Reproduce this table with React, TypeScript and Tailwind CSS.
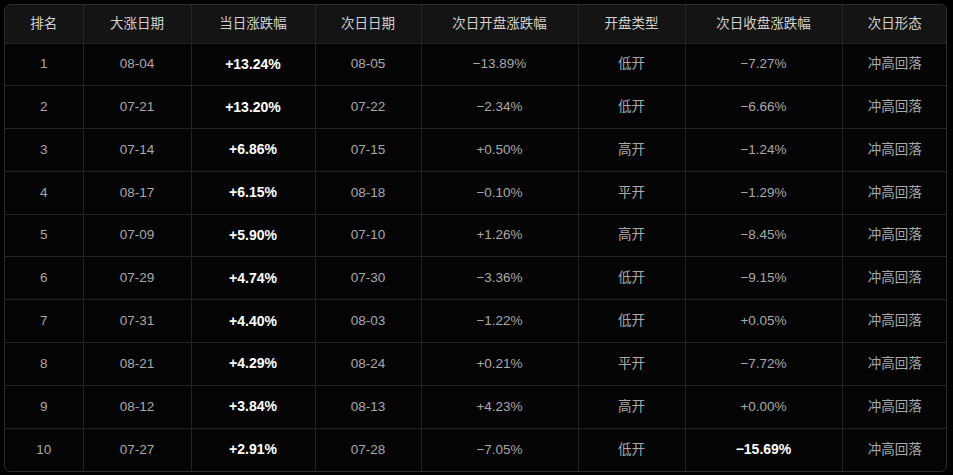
const headers = [
  { label: '排名', w: 'w-[78px]' },
  { label: '大涨日期', w: 'w-[108px]' },
  { label: '当日涨跌幅', w: 'w-[124px]' },
  { label: '次日日期', w: 'w-[106px]' },
  { label: '次日开盘涨跌幅', w: 'w-[157px]' },
  { label: '开盘类型', w: 'w-[107px]' },
  { label: '次日收盘涨跌幅', w: 'w-[157px]' },
  { label: '次日形态', w: 'w-[105px]' },
];

type Row = {
  rank: number;
  date: string;
  change: string;
  nextDate: string;
  open: string;
  openType: string;
  close: string;
  closeBold?: boolean;
  shape: string;
};

const rows: Row[] = [
  { rank: 1, date: '08-04', change: '+13.24%', nextDate: '08-05', open: '−13.89%', openType: '低开', close: '−7.27%', shape: '冲高回落' },
  { rank: 2, date: '07-21', change: '+13.20%', nextDate: '07-22', open: '−2.34%', openType: '低开', close: '−6.66%', shape: '冲高回落' },
  { rank: 3, date: '07-14', change: '+6.86%', nextDate: '07-15', open: '+0.50%', openType: '高开', close: '−1.24%', shape: '冲高回落' },
  { rank: 4, date: '08-17', change: '+6.15%', nextDate: '08-18', open: '−0.10%', openType: '平开', close: '−1.29%', shape: '冲高回落' },
  { rank: 5, date: '07-09', change: '+5.90%', nextDate: '07-10', open: '+1.26%', openType: '高开', close: '−8.45%', shape: '冲高回落' },
  { rank: 6, date: '07-29', change: '+4.74%', nextDate: '07-30', open: '−3.36%', openType: '低开', close: '−9.15%', shape: '冲高回落' },
  { rank: 7, date: '07-31', change: '+4.40%', nextDate: '08-03', open: '−1.22%', openType: '低开', close: '+0.05%', shape: '冲高回落' },
  { rank: 8, date: '08-21', change: '+4.29%', nextDate: '08-24', open: '+0.21%', openType: '平开', close: '−7.72%', shape: '冲高回落' },
  { rank: 9, date: '08-12', change: '+3.84%', nextDate: '08-13', open: '+4.23%', openType: '高开', close: '+0.00%', shape: '冲高回落' },
  { rank: 10, date: '07-27', change: '+2.91%', nextDate: '07-28', open: '−7.05%', openType: '低开', close: '−15.69%', closeBold: true, shape: '冲高回落' },
];

const cell = 'border-r border-b border-[#242424] last:border-r-0 text-center';
const plain = 'text-[13.5px] text-[#a9a9a9]';
const bold = 'text-[14px] font-bold text-white';

export default function App() {
  return (
    <div className="min-h-[475px] w-[953px] bg-black p-1 font-['Liberation_Sans','Noto_Sans_CJK_SC',sans-serif]">
      <div className="w-[943px] overflow-hidden rounded-md border border-[#2c2c2c] bg-[#040404]">
        <table className="w-full table-fixed border-collapse">
          <thead>
            <tr className="h-[38px] bg-[#141414]">
              {headers.map((h) => (
                <th
                  key={h.label}
                  className={`${h.w} ${cell} text-[13.5px] font-normal text-[#d0d0d0]`}
                >
                  {h.label}
                </th>
              ))}
            </tr>
          </thead>
          <tbody>
            {rows.map((r) => (
              <tr key={r.rank} className="h-[42.8px] last:[&>td]:border-b-0">
                <td className={`${cell} ${plain}`}>{r.rank}</td>
                <td className={`${cell} ${plain}`}>{r.date}</td>
                <td className={`${cell} ${bold}`}>{r.change}</td>
                <td className={`${cell} ${plain}`}>{r.nextDate}</td>
                <td className={`${cell} ${plain}`}>{r.open}</td>
                <td className={`${cell} ${plain}`}>{r.openType}</td>
                <td className={`${cell} ${r.closeBold ? bold : plain}`}>{r.close}</td>
                <td className={`${cell} ${plain}`}>{r.shape}</td>
              </tr>
            ))}
          </tbody>
        </table>
      </div>
    </div>
  );
}
